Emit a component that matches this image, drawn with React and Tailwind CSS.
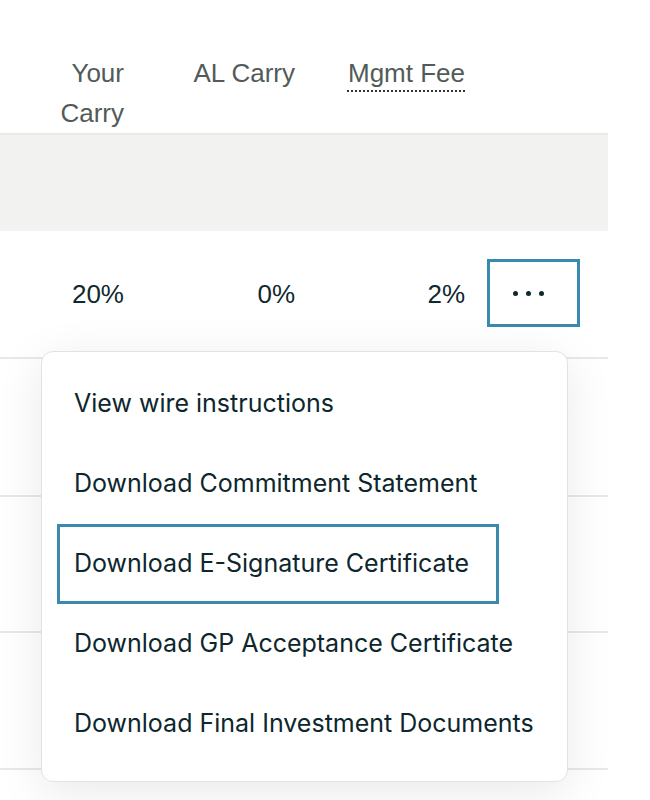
import React from "react";

const menuItems = [
  "View wire instructions",
  "Download Commitment Statement",
  "Download E-Signature Certificate",
  "Download GP Acceptance Certificate",
  "Download Final Investment Documents",
];

const ActionsMenu = ({ focused }) => {
  return (
    <div className="absolute left-[41px] top-[351px] w-[527px] h-[431px] bg-white rounded-[12px] border border-[#e2e2e2] shadow-[0_10px_48px_rgba(0,0,0,0.09)] pt-[12px] px-[15px] font-['Inter',sans-serif] text-[25px] text-[#0e262d]">
      {menuItems.map((item, i) => (
        <div key={item} className="h-[80px] flex">
          <div
            className={`h-[80px] flex items-center whitespace-nowrap ${
              i === focused
                ? "border-[3px] border-[#3a89ae] pl-[14px] pr-[27px]"
                : "pl-[17px]"
            }`}
          >
            {item}
          </div>
        </div>
      ))}
    </div>
  );
};

export default function App() {
  return (
    <div className="relative w-[650px] h-[800px] bg-white overflow-hidden font-['Liberation_Sans',Arial,sans-serif]">
      <div className="w-[608px]">
        {/* HEADER */}
        <div className="flex pt-[53px] text-[26px] leading-[40px] text-[#525b59] border-b-2 border-[#ebebea]">
          <div className="w-[124px] text-right">
            Your
            <br />
            Carry
          </div>
          <div className="w-[171px] text-right">AL Carry</div>
          <div className="w-[170px] text-right">
            <span className="underline decoration-dotted decoration-[#333] underline-offset-[8px] decoration-2">
              Mgmt Fee
            </span>
          </div>
        </div>

        {/* GROUP BAND */}
        <div className="h-[96px] bg-[#f2f2f1]"></div>

        {/* ROW */}
        <div className="h-[128px] flex items-center text-[26px] text-[#10282f] border-b-2 border-[#e8e8e8]">
          <div className="w-[124px] text-right">20%</div>
          <div className="w-[171px] text-right">0%</div>
          <div className="w-[170px] text-right">2%</div>
          <div className="ml-[22px] w-[93px] h-[68px] border-[3px] border-[#3a89ae] flex items-center pl-[23px] gap-[8px] -mt-[2px]">
            <span className="w-[5px] h-[5px] rounded-full bg-[#10282f]"></span>
            <span className="w-[5px] h-[5px] rounded-full bg-[#10282f]"></span>
            <span className="w-[5px] h-[5px] rounded-full bg-[#10282f]"></span>
          </div>
        </div>

        {/* EMPTY ROWS BEHIND MENU */}
        <div className="h-[138px] border-b-2 border-[#e8e8e8]"></div>
        <div className="h-[136px] border-b-2 border-[#e8e8e8]"></div>
        <div className="h-[137px] border-b-2 border-[#e8e8e8]"></div>
      </div>

      <ActionsMenu focused={2} />
    </div>
  );
}
